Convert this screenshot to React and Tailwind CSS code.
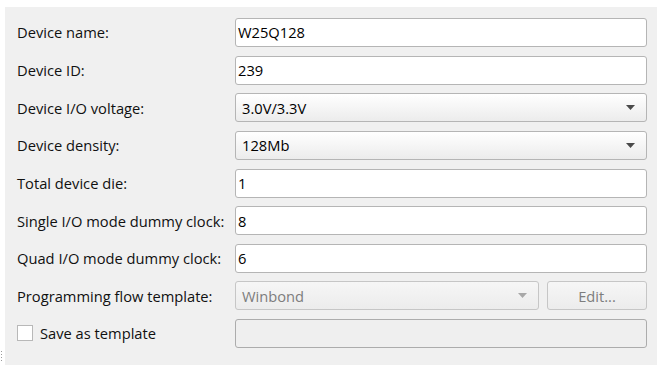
import React from 'react';

const font = { fontFamily: '"Open Sans", "Noto Sans", sans-serif' };

function TextField({ value, disabled }) {
  return (
    <div
      className={`h-[29px] flex items-center px-[2px] border rounded-[3px] text-[14.7px] ${
        disabled ? 'bg-[#efefef] border-[#acacac]' : 'bg-white border-[#b5b5b5] text-black'
      }`}
    >
      {value}
    </div>
  );
}

function Arrow({ disabled }) {
  return (
    <svg width="9" height="5" viewBox="0 0 9 5" className="shrink-0">
      <path d="M0 0h9L4.5 5z" fill={disabled ? '#a8a8a8' : '#4a4a4a'} />
    </svg>
  );
}

function Combo({ value, disabled, className = '' }) {
  return (
    <div
      className={`h-[29px] flex items-center justify-between pl-[6px] pr-[11px] border rounded-[3px] text-[14.7px] ${
        disabled
          ? 'bg-gradient-to-b from-[#f6f6f6] to-[#ececec] border-[#c6c6c6] text-[#7d7d7d]'
          : 'bg-gradient-to-b from-white to-[#ececec] border-[#b5b5b5] text-black'
      } ${className}`}
    >
      <span>{value}</span>
      <Arrow disabled={disabled} />
    </div>
  );
}

export default function App() {
  const rows = [
    { label: 'Device name:', field: <TextField value="W25Q128" /> },
    { label: 'Device ID:', field: <TextField value="239" /> },
    { label: 'Device I/O voltage:', field: <Combo value="3.0V/3.3V" /> },
    { label: 'Device density:', field: <Combo value="128Mb" /> },
    { label: 'Total device die:', field: <TextField value="1" /> },
    { label: 'Single I/O mode dummy clock:', field: <TextField value="8" /> },
    { label: 'Quad I/O mode dummy clock:', field: <TextField value="6" /> },
    {
      label: 'Programming flow template:',
      field: (
        <div className="flex gap-[8px]">
          <Combo value="Winbond" disabled className="flex-1" />
          <button className="w-[100px] h-[29px] border border-[#c6c6c6] rounded-[3px] bg-gradient-to-b from-[#f6f6f6] to-[#ececec] text-[14.7px] text-[#7d7d7d]">
            Edit...
          </button>
        </div>
      ),
    },
  ];

  return (
    <div className="w-[657px] h-[365px] bg-white pt-[7px] pl-[5px] text-[#111]" style={font}>
      <div className="relative h-full bg-[#f0f0f0] pt-[11px] pl-[12px] pr-[10px]">
        <div className="grid grid-cols-[218px_1fr] gap-y-[8.625px] items-center">
          {rows.map((r) => (
            <React.Fragment key={r.label}>
              <div className="text-[14.7px] whitespace-nowrap">{r.label}</div>
              {r.field}
            </React.Fragment>
          ))}
          <div className="flex items-center gap-[7px] text-[14.7px]">
            <span className="w-[16px] h-[16px] bg-white border border-[#b8b8b8]" />
            Save as template
          </div>
          <TextField value="" disabled />
        </div>
        <div className="absolute left-[-4px] bottom-[4px] flex flex-col gap-[2px]">
          <span className="w-[1px] h-[1px] bg-[#9a9a9a]" />
          <span className="w-[1px] h-[1px] bg-[#9a9a9a]" />
          <span className="w-[1px] h-[1px] bg-[#9a9a9a]" />
          <span className="w-[1px] h-[1px] bg-[#9a9a9a]" />
        </div>
      </div>
    </div>
  );
}
